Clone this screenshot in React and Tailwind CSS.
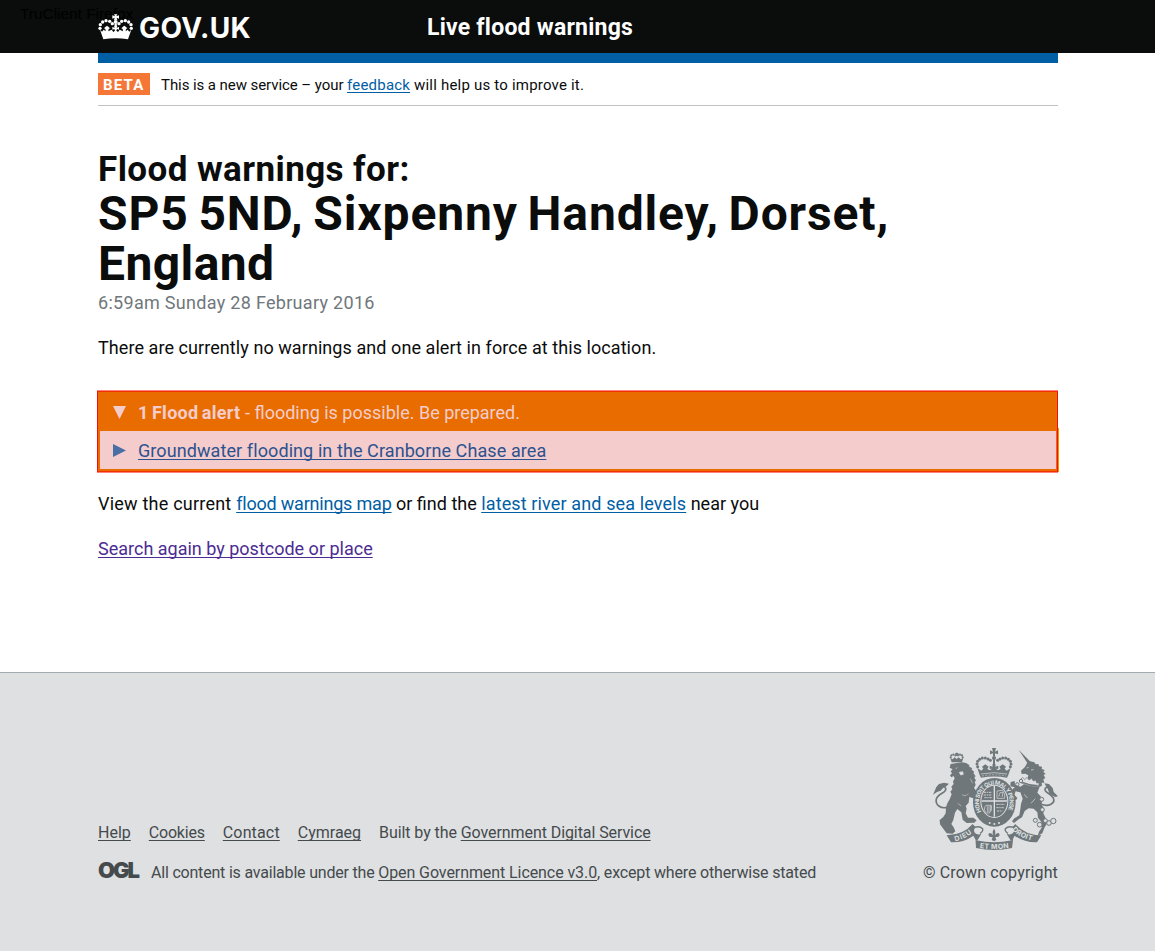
import React from "react";

function Crown() {
  const beads = [
    [300, 82, 5], [301, 71, 5], [308, 63, 5], [318, 59, 5], [329, 61, 5], [337, 68, 5],
    [394, 82, 5], [393, 71, 5], [386, 63, 5], [376, 59, 5], [365, 61, 5], [357, 68, 5],
  ];
  return (
    <svg className="h-[26px] w-[35px] shrink-0" viewBox="294 39 105 78" fill="#fff" aria-hidden="true">
      {beads.map(([x, y, r]) => (
        <circle key={`${x}-${y}`} cx={x} cy={y} r={r} />
      ))}
      <path d="M345 46 L342 40 H352 L349 46 L357 43 V53 L350 50 L352 58 H342 L344 50 L337 53 V43 Z" />
      <circle cx="347" cy="63" r="6" />
      <circle cx="347" cy="72" r="4" />
      <path d="M300 86 L306 92 L311 86 L317 91 L316 84 L312 82 L316 78 L321 74 L326 78 L330 82 L326 84 L325 91 L335 86 L340 93 L345 89 L343 84 L337 86 V78 L344 80 L342 75 H352 L350 80 L357 78 V86 L351 84 L349 89 L354 93 L359 86 L369 91 L368 84 L364 82 L368 78 L373 74 L378 78 L382 82 L378 84 L377 91 L383 86 L388 92 L394 86 L384 115 Q347 109 310 115 Z" />
    </svg>
  );
}

function Crest() {
  const ink = "#6f777b";
  const paper = "#dee0e2";
  const crownBeads = [
    [173, 80], [171, 72], [173, 64], [179, 58], [187, 54], [196, 54], [204, 57], [211, 61],
    [271, 80], [273, 72], [271, 64], [265, 58], [257, 54], [248, 54], [240, 57], [233, 61],
  ];
  const lionBeads = [[92, 52], [94, 46], [100, 44], [106, 46], [128, 52], [126, 46], [120, 44], [114, 46]];
  return (
    <svg className="h-[102px] w-[125px]" viewBox="39 24 375 306" fill={ink} aria-hidden="true">
      <defs>
        <path id="garter" d="M184 215 A46 53 0 1 1 262 215" />
        <path id="dieu" d="M106 304 Q138 296 161 276" />
        <path id="mon" d="M172 323 Q222 331 272 323" />
        <path id="droit" d="M276 270 Q298 294 342 303" />
      </defs>

      {/* royal crown */}
      <path d="M219 35 L216 24 H228 L225 35 L234 31 V43 L225 40 V48 H219 V40 L210 43 V31 Z" />
      <circle cx="222" cy="54" r="6" />
      {crownBeads.map(([x, y]) => (
        <circle key={`${x}-${y}`} cx={x} cy={y} r="4.5" />
      ))}
      <path d="M219 58 H225 V76 H219 Z" />
      <path d="M172 84 L184 92 L190 86 L186 80 L196 73 L206 80 L202 87 L210 91 L216 86 L209 87 V77 L218 80 L217 73 H227 L226 80 L235 77 V87 L228 86 L234 91 L242 87 L238 80 L248 73 L258 80 L254 86 L260 92 L272 84 L265 105 L261 113 Q222 106 183 113 L179 105 Z" />
      <path d="M183 102 Q222 94 261 102" fill="none" stroke={paper} strokeWidth="2" />
      <path d="M186 108 Q222 101 258 108" fill="none" stroke={paper} strokeWidth="1.5" strokeDasharray="6 4" />

      {/* lion */}
      <path d="M108 38 H113 V47 H108 Z M105 40 H116 V44 H105 Z" />
      {lionBeads.map(([x, y]) => (
        <circle key={`${x}-${y}`} cx={x} cy={y} r="3.2" />
      ))}
      <path d="M91 54 L98 58 L104 52 L110 57 L116 52 L122 58 L130 54 L126 67 H95 Z" />
      <path d="M92 72 L126 67 L138 69 L149 76 L146 79 L157 85 L154 88 L163 96 L160 99 L167 109 L163 112 L168 122 L164 125 L167 135 L162 143 L172 158 L177 174 L170 184 L160 175 L148 171 L146 188 L137 198 L140 206 L137 220 L144 233 L160 233 L170 241 L163 248 L140 249 L128 239 L124 217 L112 207 L105 218 L100 240 L94 252 L101 262 L106 274 L98 281 L80 280 L71 268 L60 253 L59 240 L70 231 L77 220 L78 202 L82 190 L89 178 L95 163 L91 155 L97 148 L94 140 L101 132 L99 124 L104 116 L101 108 L94 112 L90 106 L96 100 L92 94 L98 88 L89 83 Z" />
      <path d="M107 86 L112 83 M118 97 L128 95 L130 103 L122 105 Z" stroke={paper} strokeWidth="2" fill={paper} />
      <path d="M151 116 L158 130 M126 165 L138 167 L145 160 M113 190 L124 198" stroke={paper} strokeWidth="1.5" fill="none" />
      <path d="M82 202 C62 207 45 195 49 177 C54 160 82 158 77 145 C74 137 66 137 60 145" fill="none" stroke={ink} strokeWidth="5" />
      <path d="M39 164 L49 141 L57 132 L72 128 L87 131 L79 139 L70 143 L62 152 L51 156 Z" />

      {/* unicorn */}
      <path d="M296 29 L332 66 L324 72 Z" />
      <path d="M322 68 L330 64 L343 67 L347 73 L355 72 L357 79 L366 80 L365 87 L374 90 L370 96 L377 101 L371 105 L376 114 L370 118 L373 128 L365 128 L366 137 L359 140 L356 148 L352 158 L362 169 L366 180 L365 194 L373 207 L370 220 L378 237 L380 252 L373 264 L367 280 L353 288 L357 275 L365 263 L364 246 L354 233 L352 217 L341 206 L326 205 L314 213 L306 232 L296 238 L282 249 L276 244 L283 235 L298 226 L301 207 L303 192 L308 176 L301 157 L287 154 L283 164 L292 174 L288 181 L279 180 L272 165 L278 147 L285 142 L271 139 L272 126 L284 123 L285 134 L301 140 L310 134 L321 122 L325 106 L316 101 L305 102 L303 92 L314 82 Z" />
      <path d="M301 119 L308 112 L314 119 L321 112 L327 120 L335 115 L340 123 L347 120 L350 129 L357 128 L356 139 Q328 141 303 129 Z" fill={paper} stroke={ink} strokeWidth="2" />
      <path d="M307 127 Q330 137 353 137" stroke={ink} strokeWidth="4" fill="none" />
      <path d="M320 84 L326 82 M333 90 L341 89 M313 163 L322 174 M346 176 L333 190" stroke={paper} strokeWidth="2" fill="none" />
      <path d="M364 193 C386 201 407 190 400 174 C392 159 369 157 376 145 C382 136 395 145 390 158" fill="none" stroke={ink} strokeWidth="5" />
      <path d="M373 130 L387 132 L398 144 L401 156 L414 169 L405 171 L389 161 L382 145 Z" />
      <g fill={paper} stroke={ink} strokeWidth="3">
        <circle cx="303" cy="123" r="5" />
        <circle cx="292" cy="133" r="5" />
        <circle cx="365" cy="178" r="6" />
        <circle cx="367" cy="209" r="6" />
        <circle cx="346" cy="241" r="6" />
        <circle cx="359" cy="254" r="7" />
        <circle cx="376" cy="242" r="6" />
        <circle cx="387" cy="249" r="7" />
        <circle cx="400" cy="243" r="8" />
      </g>

      {/* shield and garter */}
      <ellipse cx="223" cy="187" rx="64" ry="73" />
      <ellipse cx="223" cy="184" rx="42" ry="50" fill={paper} />
      <ellipse cx="223" cy="184" rx="39" ry="47" />
      <path d="M223 138 V230 M185 183 H261" stroke={paper} strokeWidth="4" />
      <path d="M192 157 H216 M191 165 H216 M193 173 H216 M229 193 H254 M229 203 H253 M231 213 H247" stroke={paper} strokeWidth="2.5" strokeDasharray="7 2 4 2" />
      <path d="M231 153 L247 151 L254 162 L254 175 H231 Z M236 170 L240 158 L249 158 L246 171" fill="none" stroke={paper} strokeWidth="2" />
      <path d="M199 220 Q188 207 198 196 H214 Q217 213 205 222 M202 199 V221 M207 198 V219 M212 197 V213" fill="none" stroke={paper} strokeWidth="2" />
      <text fill={paper} className="font-['Inter',sans-serif] font-bold" fontSize="17">
        <textPath href="#garter" textLength="208" lengthAdjust="spacing">HONI SOIT QUI MAL Y PENSE</textPath>
      </text>
      <circle cx="209" cy="249" r="3" fill={paper} />
      <circle cx="223" cy="252" r="3" fill={paper} />
      <circle cx="237" cy="249" r="3" fill={paper} />

      {/* motto ribbon */}
      <path d="M80 286 Q130 285 158 252 L167 262 Q158 271 165 279 Q171 286 184 282 L171 303 Q164 296 160 287 Q132 308 93 307 Z" />
      <path d="M364 286 Q314 285 286 252 L277 262 Q286 271 279 279 Q273 286 260 282 L273 303 Q280 296 284 287 Q312 308 351 307 Z" />
      <path d="M162 263 Q178 256 188 266 Q190 275 180 280 M282 263 Q266 256 256 266 Q254 275 264 280" fill="none" stroke={ink} strokeWidth="4" />
      <path d="M168 301 Q222 313 276 301 L278 279 Q282 284 276 324 Q222 336 168 324 L166 288 Z" />
      <g fill={paper} className="font-['Inter',sans-serif] font-bold" fontSize="21">
        <text><textPath href="#dieu" textLength="56">DIEU</textPath></text>
        <text><textPath href="#mon" textLength="88" startOffset="7">ET MON</textPath></text>
        <text><textPath href="#droit" textLength="68">DROIT</textPath></text>
      </g>
      <path d="M222 266 Q229 276 224 286 Q236 273 239 284 Q238 292 230 291 L226 291 L229 300 L222 304 L215 300 L218 291 L214 291 Q206 292 205 284 Q208 273 220 286 Q215 276 222 266 Z" />
    </svg>
  );
}

const underline = "underline decoration-1 underline-offset-2 [text-decoration-skip-ink:none]";

export default function App() {
  return (
    <div className="w-[1155px] bg-white font-['Roboto','Liberation_Sans',sans-serif] text-[#0b0c0c]">
      <header className="relative h-[53px] bg-[#0b0c0c] text-white">
        <span className="absolute top-[5px] left-5 font-['Liberation_Sans',sans-serif] text-[15.4px] leading-[18px] text-black">
          TruClient Firefox
        </span>
        <div className="relative ml-[98px] flex h-full w-[960px] items-center">
          <div className="flex w-[329px] items-center gap-[6px]">
            <Crown />
            <span className="pt-[2px] font-['Inter',sans-serif] text-[28px] leading-8 font-bold tracking-[0.4px]">GOV.UK</span>
          </div>
          <span className="pt-0.5 text-[23px] leading-7 font-bold tracking-[0.24px]">Live flood warnings</span>
        </div>
      </header>

      <main className="ml-[98px] w-[960px]">
        <div className="h-[10px] bg-[#005ea5]" />
        <div className="flex h-[43px] items-center gap-[11px] border-b border-[#bfc1c3] text-[15px]">
          <strong className="flex h-[22px] w-[52px] items-center bg-[#f47738] pt-[2px] pl-[5px] font-bold tracking-[1.2px] text-white">
            BETA
          </strong>
          <span className="pt-[2px]">
            <span className="tracking-[-0.07px]">This is a new service – your </span>
            <a className={`tracking-[0.2px] text-[#005ea5] ${underline}`}>feedback</a>
            <span className="tracking-[0.2px]"> will help us to improve it.</span>
          </span>
        </div>

        <h1 className="mt-[44px] font-bold">
          <span className="block pt-px text-[35px] leading-[38px] tracking-[0.42px]">Flood warnings for:</span>
          <span className="block text-[48px] leading-[50px] tracking-[0.86px] [word-spacing:-3px]">
            SP5 5ND, Sixpenny Handley, Dorset,
            <br />
            <span className="tracking-[0.4px]">England</span>
          </span>
        </h1>
        <p className="text-[18px] leading-[28px] tracking-[0.3px] text-[#6f777b]">6:59am Sunday 28 February 2016</p>
        <p className="mt-[18px] text-[18px] leading-[25px] tracking-[0.07px]">
          There are currently no warnings and one alert in force at this location.
        </p>

        <section className="relative mt-[30px] -ml-px w-[961px] border-y border-[#ff8080] text-[18px]">
          <div className="border border-[#f01010] border-y-[#f43000] bg-[#e96c00]">
            <div className="flex h-[39px] items-center pt-px pl-[15px] text-[#f4cccc]">
              <svg className="mr-3 h-[13px] w-[13px]" viewBox="0 0 13 13" fill="currentColor" aria-hidden="true">
                <path d="M0 0H13L6.5 13Z" />
              </svg>
              <span className="whitespace-pre">
                <b className="tracking-[0.3px] [word-spacing:-1.5px]">1 Flood alert</b> - flooding is possible. Be prepared.
              </span>
            </div>
            <div className="mr-px mb-[2px] ml-[2px] flex h-[38px] items-center bg-[#f4cccc] pt-px pl-[13px]">
              <svg className="mr-3 h-[13px] w-[13px]" viewBox="0 0 13 13" fill="#4a6fa5" aria-hidden="true">
                <path d="M0 0L13 6.5L0 13Z" />
              </svg>
              <a className={`tracking-[0.09px] text-[#2c5290] ${underline}`}>
                Groundwater flooding in the Cranborne Chase area
              </a>
            </div>
          </div>
          <span className="absolute top-[37px] left-[961px] h-[44px] w-px bg-[#f79400]" />
        </section>

        <p className="mt-[18px] text-[18px] leading-[25px]">
          <span className="tracking-[0.22px]">View the current </span>
          <a className={`tracking-[-0.2px] text-[#005ea5] ${underline}`}>flood warnings map</a>
          <span> or find the </span>
          <a className={`tracking-[0.13px] text-[#005ea5] ${underline}`}>latest river and sea levels</a> near you
        </p>
        <p className="mt-[20px] text-[18px] leading-[25px]">
          <a className={`text-[#4c2c92] ${underline}`}>Search again by postcode or place</a>
        </p>
      </main>

      <footer className="mt-[111px] h-[279px] border-t border-[#a1acb2] bg-[#dee0e2] pt-[75px] text-[16px] leading-5 text-[#454a4c]">
        <div className="ml-[98px] flex h-[135px] w-[960px] items-end justify-between">
          <div className="flex flex-col gap-5">
            <div className="flex gap-[18px]">
              <a className={underline}>Help</a>
              <a className={`tracking-[-0.2px] ${underline}`}>Cookies</a>
              <a className={`tracking-[0.15px] ${underline}`}>Contact</a>
              <a className={underline}>Cymraeg</a>
              <span>
                <span className="tracking-[-0.08px]">Built by the </span>
                <a className={`tracking-[-0.08px] ${underline}`}>Government Digital Service</a>
              </span>
            </div>
            <div className="flex">
              <span className="-mt-[3px] w-[53px] font-['Inter',sans-serif] text-[22px] leading-5 font-black tracking-[-2.1px]">
                OGL
              </span>
              <span>
                <span className="tracking-[-0.2px]">All content is available under the </span>
                <a className={`tracking-[-0.08px] ${underline}`}>Open Government Licence v3.0</a>
                <span className="tracking-[-0.17px]">, except where otherwise stated</span>
              </span>
            </div>
          </div>
          <div className="flex flex-col items-end gap-[13px]">
            <Crest />
            <span className="tracking-[0.15px]">© Crown copyright</span>
          </div>
        </div>
      </footer>
    </div>
  );
}
